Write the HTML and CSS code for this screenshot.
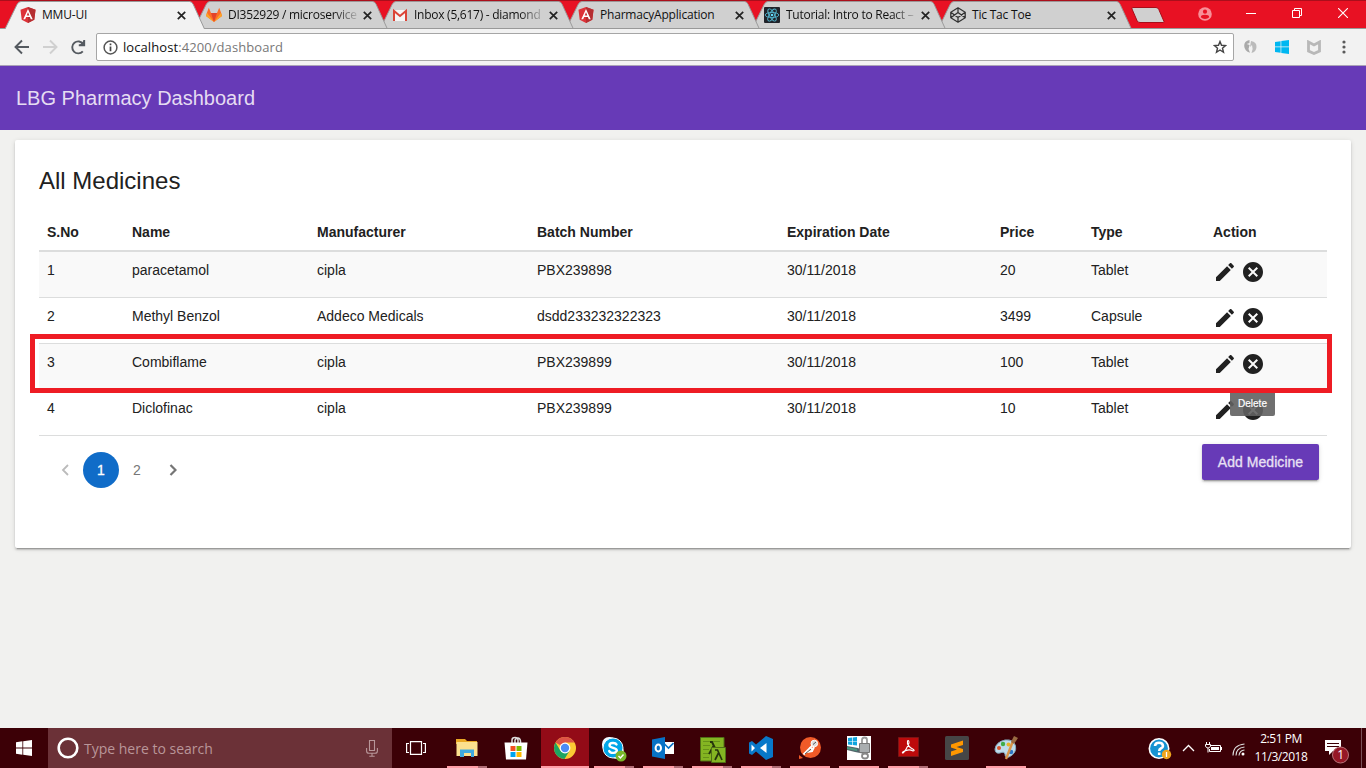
FILE: index.html
```html
<!DOCTYPE html>
<html lang="en">
<head>
<meta charset="utf-8">
<title>MMU-UI</title>
<link rel="stylesheet" href="styles.css">
</head>
<body>
<svg class="defs" width="0" height="0">
  <symbol id="tab" viewBox="0 0 200 28"><path class="tab-fill" d="M0 28 12 3.5Q13.5.500 16 .500H184.500Q187 .500 188.300 3.500L199.500 28"/></symbol>
  <symbol id="close" viewBox="0 0 9 9"><path d="M.8.800 8.200 8.200M8.200.800.800 8.200" stroke="currentColor" stroke-width="1.700"/></symbol>
  <symbol id="angular" viewBox="0 0 16 17"><path fill="#dd3238" d="M8 0 16 2.800 14.700 13.500 8 17 1.300 13.500 0 2.800z"/><path fill="#b52e31" d="M8 0 16 2.800 14.700 13.500 8 17z"/><path fill="#fff" fill-rule="evenodd" d="M8 2 3 13H5L6 10.500H10L11 13H13zM8 5.600 9.400 9H6.600z"/></symbol>
  <symbol id="edit" viewBox="0 0 24 24"><path fill="currentColor" d="M3 17.250V21h3.750L17.810 9.940l-3.750-3.750L3 17.250zM20.710 7.040c.39-.39.39-1.020 0-1.410l-2.340-2.340c-.39-.39-1.020-.39-1.410 0l-1.830 1.830 3.750 3.750 1.830-1.830z"/></symbol>
  <symbol id="cancel" viewBox="0 0 24 24"><path fill="currentColor" d="M12 2C6.470 2 2 6.470 2 12s4.470 10 10 10 10-4.470 10-10S17.530 2 12 2zm5 13.590L15.590 17 12 13.410 8.410 17 7 15.590 10.590 12 7 8.410 8.410 7 12 10.590 15.590 7 17 8.410 13.410 12 17 15.590z"/></symbol>
  <symbol id="windows" viewBox="0 0 16 16"><path fill="currentColor" d="M0 2.200 6.400 1.300V7.500H0zM7.200 1.200 16 0V7.500H7.200zM0 8.400H6.400V14.700L0 13.800zM7.200 8.400H16V16L7.200 14.800z"/></symbol>
</svg>

<header class="browser">
  <div class="tabs">
    <div class="tab active"><svg class="shape"><use href="#tab"/></svg><svg class="fav"><use href="#angular"/></svg><span class="tab-title">MMU-UI</span><svg class="close"><use href="#close"/></svg></div>
    <div class="tab"><svg class="shape"><use href="#tab"/></svg><svg class="fav" viewBox="0 0 16 16"><path fill="#fc6d26" d="M8 15 0 9 1 5.500 2.800.800 5 6H11L13.200.800 15 5.500 16 9z"/><path fill="#e24329" d="M8 15 5 6H11z"/><path fill="#fca326" d="M8 15 0 9 1 5.800zM8 15 16 9 15 5.800z"/></svg><span class="tab-title fade">DI352929 / microservice</span><svg class="close"><use href="#close"/></svg></div>
    <div class="tab"><svg class="shape"><use href="#tab"/></svg><svg class="fav" viewBox="0 0 16 16"><path fill="#f5f5f5" d="M1 3H15V14H1z"/><path fill="none" stroke="#db4437" stroke-width="2" d="M2 14V4L8 9 14 4V14"/></svg><span class="tab-title fade">Inbox (5,617) - diamond</span><svg class="close"><use href="#close"/></svg></div>
    <div class="tab"><svg class="shape"><use href="#tab"/></svg><svg class="fav"><use href="#angular"/></svg><span class="tab-title">PharmacyApplication</span><svg class="close"><use href="#close"/></svg></div>
    <div class="tab"><svg class="shape"><use href="#tab"/></svg><svg class="fav" viewBox="0 0 16 16"><rect width="16" height="16" rx="1" fill="#20232a"/><g fill="none" stroke="#53b5cf" stroke-width=".9"><ellipse cx="8" cy="8" rx="6.800" ry="2.600"/><ellipse cx="8" cy="8" rx="6.800" ry="2.600" transform="rotate(60 8 8)"/><ellipse cx="8" cy="8" rx="6.800" ry="2.600" transform="rotate(120 8 8)"/></g><circle cx="8" cy="8" r="1.300" fill="#61dafb"/></svg><span class="tab-title fade">Tutorial: Intro to React –</span><svg class="close"><use href="#close"/></svg></div>
    <div class="tab"><svg class="shape"><use href="#tab"/></svg><svg class="fav" viewBox="0 0 16 16"><path fill="none" stroke="#333" stroke-width="1.300" stroke-linejoin="round" d="M8 .800 15.200 5.200V10.800L8 15.200.800 10.800V5.200zM8 .800V5.400M8 15.200V10.600M.800 5.200 8 10.600 15.200 5.200M.800 10.800 8 5.400 15.200 10.800"/></svg><span class="tab-title">Tic Tac Toe</span><svg class="close"><use href="#close"/></svg></div>
    <svg class="new-tab" viewBox="0 0 34 17"><path fill="#d0d0d0" stroke="#a80d19" d="M1.500.500H25Q27 .500 27.800 2.500L33 14.500Q33 15.500 32 15.500H9Q7 15.500 6.200 14L1 2Q.700.500 1.500.500z"/></svg>
    <div class="controls">
      <svg width="14" height="14" viewBox="0 0 14 14"><circle cx="7" cy="7" r="6.800" fill="#f88f98"/><circle cx="7" cy="4.700" r="2.100" fill="#e81123"/><path fill="#e81123" d="M2.800 10.200Q3 7.800 7 7.800T11.200 10.200Q9.500 12 7 12T2.800 10.200z"/></svg>
      <svg width="10" height="10" viewBox="0 0 10 10"><path stroke="#fff" d="M0 5.500H10"/></svg>
      <svg width="10" height="10" viewBox="0 0 10 10"><path fill="none" stroke="#fff" d="M.500 2.500H7.500V9.500H.500zM2.500 2.500V.500H9.500V7.500H7.500"/></svg>
      <svg width="10" height="10" viewBox="0 0 10 10"><path stroke="#fff" stroke-width="1.100" d="M0 0 10 10M10 0 0 10"/></svg>
    </div>
  </div>
  <div class="toolbar">
    <svg class="nav-icon" viewBox="0 0 16 16"><path d="M15 8H2M8 1.500 1.500 8 8 14.500"/></svg>
    <svg class="nav-icon disabled" viewBox="0 0 16 16"><path d="M1 8H14M8 1.500 14.500 8 8 14.500"/></svg>
    <svg class="nav-icon" viewBox="0 0 16 16"><path d="M12.800 12.300A6 6 0 1 1 13.200 5M14.200 1V6.200H8.800"/><path class="solid" d="M14.500 1V6.700H8.800z"/></svg>
    <div class="omnibox">
      <svg width="15" height="15" viewBox="0 0 15 15"><circle cx="7.500" cy="7.500" r="6.400" fill="none" stroke="#555" stroke-width="1.500"/><path stroke="#444" stroke-width="1.700" d="M7.500 6.500V11.200M7.500 3.500V5.200"/></svg>
      <span class="url"><b>localhost</b>:4200/dashboard</span>
      <svg class="star" width="14" height="14" viewBox="0 0 14 14"><path fill="none" stroke="#444" stroke-width="1.400" d="M7 1.500 8.500 5.300 12.600 5.600 9.500 8.200 10.500 12.300 7 10 3.500 12.300 4.500 8.200 1.400 5.600 5.500 5.300z"/></svg>
    </div>
    <div class="extensions">
      <svg width="13" height="14" viewBox="0 0 13 14"><path fill="#a9a9a9" d="M5.500 0Q0 1 .200 6 .500 11 6 12.800L4.500 9 5.600 5 2.700 4 5.500 3z"/><path fill="#bbb" d="M7 1Q12.800 2 12.500 7T7.500 13Q9.500 9 8 5L6 7z"/></svg>
      <svg class="blue" width="14" height="14"><use href="#windows"/></svg>
      <svg class="shield" width="14" height="15" viewBox="0 0 14 15"><path fill="none" stroke="#b8b8b8" stroke-width="2.800" d="M1.500 2V11L7 13.500 12.500 11V2L7 5z"/></svg>
      <svg class="menu" width="4" height="14" viewBox="0 0 4 14"><g fill="#5a5a5a"><circle cx="2" cy="2" r="1.600"/><circle cx="2" cy="7" r="1.600"/><circle cx="2" cy="12" r="1.600"/></g></svg>
    </div>
  </div>
</header>

<main class="page">
  <div class="app-bar">LBG Pharmacy Dashboard</div>
  <section class="card">
    <h1>All Medicines</h1>
    <table class="medicines">
      <colgroup><col class="c-no"><col class="c-name"><col class="c-maker"><col class="c-batch"><col class="c-date"><col class="c-price"><col class="c-type"><col></colgroup>
      <thead><tr><th>S.No</th><th>Name</th><th>Manufacturer</th><th>Batch Number</th><th>Expiration Date</th><th>Price</th><th>Type</th><th>Action</th></tr></thead>
      <tbody>
        <tr><td>1</td><td>paracetamol</td><td>cipla</td><td>PBX239898</td><td>30/11/2018</td><td>20</td><td>Tablet</td><td><div class="actions"><svg><use href="#edit"/></svg><svg><use href="#cancel"/></svg></div></td></tr>
        <tr><td>2</td><td>Methyl Benzol</td><td>Addeco Medicals</td><td>dsdd233232322323</td><td>30/11/2018</td><td>3499</td><td>Capsule</td><td><div class="actions"><svg><use href="#edit"/></svg><svg><use href="#cancel"/></svg></div></td></tr>
        <tr><td>3</td><td>Combiflame</td><td>cipla</td><td>PBX239899</td><td>30/11/2018</td><td>100</td><td>Tablet</td><td><div class="actions"><svg><use href="#edit"/></svg><svg><use href="#cancel"/></svg></div></td></tr>
        <tr><td>4</td><td>Diclofinac</td><td>cipla</td><td>PBX239899</td><td>30/11/2018</td><td>10</td><td>Tablet</td><td><div class="actions"><svg><use href="#edit"/></svg><svg><use href="#cancel"/></svg></div></td></tr>
      </tbody>
    </table>
    <div class="table-footer">
      <nav class="pager">
        <svg class="prev" viewBox="0 0 8 12"><path d="M7 1 2 6 7 11"/></svg>
        <span class="current">1</span><span>2</span>
        <svg viewBox="0 0 8 12"><path d="M1.500 1 6.500 6 1.500 11"/></svg>
      </nav>
      <button class="add">Add Medicine</button>
    </div>
  </section>
  <div class="tooltip">Delete</div>
  <div class="marker"></div>
</main>

<footer class="taskbar">
  <div class="start"><svg width="16" height="16"><use href="#windows"/></svg></div>
  <div class="search">
    <svg width="22" height="22" viewBox="0 0 22 22"><circle cx="11" cy="11" r="9.300" fill="none" stroke="#fff" stroke-width="2.600"/></svg>
    <span>Type here to search</span>
    <svg class="mic" width="12" height="17" viewBox="0 0 12 17"><path fill="none" stroke="#b89699" stroke-width="1.100" d="M3.500.500H8.500V10.500H3.500zM.600 8V11Q.600 13.300 3 13.300H9Q11.400 13.300 11.400 11V8M6 13.300V16.300M3.300 16.300H8.700"/></svg>
  </div>
  <div class="start"><svg width="20" height="14" viewBox="0 0 20 14"><path fill="none" stroke="#fff" stroke-width="1.200" d="M4.500.600H15.500V13.400H4.500zM3 2.500H.600V11.500H3M17 2.500H19.400V11.500H17"/></svg></div>
  <div class="apps">
    <div class="app open multi"><svg width="22" height="20" viewBox="0 0 22 20"><path fill="#e9a825" d="M0 1H9L11 3H21V6H0z"/><path fill="#fbe08f" d="M.500 4H21.500V18H.500z"/><path fill="#3fa9e0" d="M4 19V11.500H18V19H15V15H8V19z"/></svg></div>
    <div class="app"><svg width="24" height="24" viewBox="0 0 24 24"><path fill="none" stroke="#ddd" stroke-width="1.500" d="M8 7V4Q8 1.500 11 1.500T14 4V7M11 7V4Q12 2 14 2T16.500 5V7"/><path fill="#fff" d="M.500 6.500H23.500L22 23.500H2z"/><path fill="#f25022" d="M6.500 10H11.500V15H6.500z"/><path fill="#7fba00" d="M12.500 10H17.500V15H12.500z"/><path fill="#00a4ef" d="M6.500 16H11.500V21H6.500z"/><path fill="#ffb900" d="M12.500 16H17.500V21H12.500z"/></svg></div>
    <div class="app open focused"><svg width="22" height="22" viewBox="0 0 22 22"><circle cx="11" cy="11" r="11" fill="#fcc934"/><path fill="#de5246" d="M11 11 1.500 5.500A11 11 0 0 1 20.500 5.500H11z"/><path fill="#1da462" d="M1.500 5.500A11 11 0 0 0 10.500 22L15.700 13.500 6.300 13.500z"/><circle cx="11" cy="11" r="5.400" fill="#fff"/><circle cx="11" cy="11" r="4.200" fill="#4c8bf5"/></svg></div>
    <div class="app open multi"><svg class="skype" width="26" height="26" viewBox="0 0 26 26"><rect x="0" y="0" width="15" height="15" rx="7" fill="#f2faff"/><rect x="8" y="8" width="14" height="14" rx="7" fill="#f2faff"/><circle cx="11" cy="11" r="10" fill="#00a5e8" stroke="#f2faff"/><path fill="none" stroke="#fff" stroke-width="2.400" stroke-linecap="round" d="M14.500 7.500C13.500 5.300 7.500 5.300 7.500 8.300S14.800 10.500 14.800 13.500 8.500 16.700 7.200 14"/><circle cx="19" cy="19" r="5.500" fill="#78b629"/><path fill="none" stroke="#fff" stroke-width="1.400" d="M16.500 19 18.400 21 21.500 17.500"/></svg></div>
    <div class="app open multi"><svg width="22" height="22" viewBox="0 0 22 22"><path fill="#fff" d="M11 5H22V17H11z"/><path fill="none" stroke="#0872c6" stroke-width="1.600" d="M12 6.500 16.500 11 21.500 6"/><path fill="#0872c6" d="M0 2.500 13 0V22L0 19.500z"/><ellipse cx="6.300" cy="11" rx="2.700" ry="3.500" fill="none" stroke="#fff" stroke-width="2"/></svg></div>
    <div class="app open multi"><svg class="low" width="26" height="26" viewBox="0 0 26 26"><path fill="#84b522" stroke="#506f16" d="M.500.500H24V24H.500z"/><path stroke="#679119" d="M3 4.500H20M3 8.500H10M3 12.500H9M3 16.500H9M3 20.500H9"/><path fill="none" stroke="#26350d" stroke-width="1.900" d="M10 5H12L17 15M13.500 9 9 17"/><path fill="#84b522" stroke="#506f16" d="M11.500 10.500H25.500V25.500H11.500z"/><path fill="none" stroke="#26350d" stroke-width="1.700" d="M15 13H17.500L22 23M18.500 16 15 23"/></svg></div>
    <div class="app open multi"><svg width="24" height="24" viewBox="0 0 24 24"><path fill="#0878c9" d="M17 0 24 3V21L17 24 7 15.500 3 19 0 17.500V6.500L3 5 7 8.500z"/><path fill="#fff" d="M17.500 7V17L11 12zM2.500 8.500V15.500L6 12z"/></svg></div>
    <div class="app open"><svg width="22" height="22" viewBox="0 0 22 22"><circle cx="11.500" cy="10.500" r="10.500" fill="#f05a28"/><path fill="#f05a28" d="M0 22V18L4 21z"/><circle cx="15.300" cy="6.500" r="3.300" fill="#ddd" stroke="#fff"/><path fill="none" stroke="#fff" stroke-width="2" d="M13 9 4.500 17.500M8 15 13 14 15 10M10 11 13 12"/><path stroke="#555" d="M14 7.500 17 5M6 17 12 12"/></svg></div>
    <div class="app open"><svg width="24" height="24" viewBox="0 0 24 24"><path fill="#fff" d="M0 0H24V24H0z"/><path fill="#10a6df" d="M1 2 5 1.500V5H1zM5.700 1.400 10 1V5H5.700zM1 5.600H5V9L1 8.500zM5.700 5.600H10V9.600L5.700 9z"/><path fill="#53656b" d="M0 10 11 12 18 16V18L8 16 0 14z"/><path fill="#4b9a81" d="M0 11 10 13V15L0 13z"/><path fill="none" stroke="#999" stroke-width="1.800" d="M15 8V4Q15 1.500 17.500 1.500T20 4V8"/><path fill="#a9adaf" stroke="#777" d="M12.500 7.500H22.500V16.500H12.500z"/><ellipse cx="18" cy="20" rx="3" ry="2.500" fill="none" stroke="#888" stroke-width="1.800"/></svg></div>
    <div class="app open multi"><svg class="high" width="21" height="20" viewBox="0 0 21 20"><path fill="#bd0a0b" stroke="#7b1415" d="M.500.500H20.500V19.500H.500z"/><path fill="none" stroke="#fff" stroke-width="1.100" d="M9.500 4Q8.500 9 15.500 12.500 17 14 15 14 11 11.500 5.500 14.500 3.500 16 5 16 8 13.500 11 6 11 2.500 9.500 4z"/></svg></div>
    <div class="app"><svg width="24" height="24" viewBox="0 0 24 24"><rect width="24" height="24" rx="1.500" fill="#464646"/><path fill="#ff9800" d="M6 8.500 18 4.500V9L11.500 11 18 13V16L6 20V15.500L12 13.500 6 11.500z"/></svg></div>
    <div class="app open"><svg width="24" height="24" viewBox="0 0 24 24"><path fill="#bfdceb" stroke="#84aabd" d="M11 4Q20 3 21.500 10T15 21Q11 22 11 18 10 15 6 17 1 18 1 13 2 6 11 4z"/><circle cx="9" cy="8" r="2.200" fill="#40ad48"/><circle cx="14.500" cy="8.500" r="2" fill="#e8b329"/><circle cx="5" cy="12" r="2" fill="#d9542b"/><circle cx="17" cy="16" r="2.300" fill="#2d75c4"/><path stroke="#d9954a" stroke-width="2.400" d="M12 23 19 5"/><path fill="#9a6b42" d="M17 6 20 0 24 2 20 8z"/></svg></div>
  </div>
  <div class="tray">
    <svg class="help" width="24" height="22" viewBox="0 0 24 22"><circle cx="11" cy="10.500" r="9.700" fill="#1593d2" stroke="#fff" stroke-width="1.600"/><path fill="none" stroke="#fff" stroke-width="2.600" d="M7 8Q7.300 4.700 11 4.700T15 8Q15 9.500 12.800 10.500 11.200 11.300 11.200 13M11.200 14.500V17"/><circle cx="18.500" cy="16.500" r="4.700" fill="#efa51d"/><path stroke="#fff" stroke-width="1.300" d="M18.500 14V19"/></svg>
    <svg class="chevron" width="13" height="8" viewBox="0 0 13 8"><path fill="none" stroke="#fff" stroke-width="1.300" d="M1 7 6.500 1.500 12 7"/></svg>
    <svg class="battery" width="17" height="12" viewBox="0 0 17 12"><path fill="none" stroke="#fff" d="M5 3.500H15.500V9.500H4.500V7M1.500 0V2.500M4.500 0V2.500M.500 2.500H5.500V4Q5 6 3 6T.500 4zM3 6V10.500"/><path fill="#fff" d="M6 5H14V8H6zM16 5H17V8H16z"/></svg>
    <svg class="wifi" width="13" height="13" viewBox="0 0 13 13"><g fill="none" stroke="#ddd" stroke-width="1.100"><path d="M1 12.500Q1 2 12.500 1"/><path d="M4 12.500Q4 5 12.500 4"/><path d="M7 12.500Q7.500 7.500 12.500 7"/></g><circle cx="11" cy="11" r="1.500" fill="#fff"/></svg>
    <div class="clock"><span>2:51 PM</span><span>11/3/2018</span></div>
    <svg class="notice" width="26" height="26" viewBox="0 0 26 26"><path fill="#fff" d="M1 2H17V13H9L5 17V13H1z"/><path stroke="#3c0006" d="M3 5.500H15M3 8.500H15"/><circle cx="16.500" cy="17" r="8" fill="#961826" stroke="#b9747b"/></svg>
    <span class="badge">1</span>
    <i class="desktop-edge"></i>
  </div>
</footer>
</body>
</html>
```
FILE: styles.css
```css
* { box-sizing: border-box; }
body { margin: 0; width: 1366px; height: 768px; overflow: hidden; display: flex; flex-direction: column; font-family: "Liberation Sans", Arial, sans-serif; color: #212121; background: #f1f1ef; }
svg { display: block; flex: none; }
.defs { position: absolute; }

.browser { height: 66px; flex: none; font-family: "Open Sans", "Noto Sans", sans-serif; }
.tabs { height: 29px; display: flex; background: #e81123; border-top: 1px solid #ab0e1b; border-bottom: 1px solid #999; padding-left: 5px; }
.tab { position: relative; width: 186px; height: 28px; flex: none; display: flex; align-items: center; padding: 0 9px 0 15px; color: #111; z-index: 1; }
.tab:nth-child(1) { z-index: 7; }
.tab:nth-child(2) { z-index: 6; }
.tab:nth-child(3) { z-index: 5; }
.tab:nth-child(4) { z-index: 4; }
.tab:nth-child(5) { z-index: 3; }
.tab:nth-child(6) { z-index: 2; }
.shape { position: absolute; left: 0; top: 0; width: 200px; height: 27px; z-index: -1; fill: #d0d0d0; stroke: #999; }
.active .shape { fill: #f2f2f2; height: 28px; }
.fav { width: 16px; height: 16px; }
.tab-title { flex: none; width: 129px; margin-left: 6px; white-space: nowrap; font-size: 12px; letter-spacing: -.2px; line-height: 20px; }
.fade { letter-spacing: -.26px; -webkit-mask-image: linear-gradient(90deg, #000 82%, rgba(0,0,0,.15)); mask-image: linear-gradient(90deg, #000 82%, rgba(0,0,0,.15)); }
.close { width: 9px; height: 9px; margin-left: 6px; margin-top: 1px; color: #222; }
.new-tab { width: 34px; height: 17px; margin: 6px 0 0 10px; }
.controls { flex: 1; display: grid; grid-template-columns: repeat(4, 46px); justify-content: end; justify-items: center; padding-top: 7px; align-items: start; height: 25px; }
.controls svg:first-child { margin-top: -1px; }
.toolbar { height: 37px; display: flex; align-items: center; background: #f2f2f2; border-bottom: 1px solid #aaa2b8; padding: 0 18px 0 14px; }
.nav-icon { width: 16px; height: 16px; margin-right: 12px; fill: none; stroke: #555a60; stroke-width: 1.900; }
.nav-icon.disabled { stroke: #d0d0d0; }
.nav-icon .solid { fill: #555a60; stroke: none; }
.omnibox { width: 1138px; height: 28px; margin-left: -2px; flex: none; display: flex; align-items: center; background: #fff; border: 1px solid #a6a6a6; border-radius: 2px; padding: 0 6px; }
.url { margin-left: 5px; color: #777; font-size: 13px; letter-spacing: .08px; white-space: nowrap; }
.url b { font-weight: 400; color: #111; }
.star { margin-left: auto; }
.extensions { flex: 1; display: flex; align-items: center; padding-left: 10px; }
.blue { color: #00b7f1; margin-left: 18px; }
.shield { margin-left: 18px; }
.menu { margin-left: 21px; }

.page { position: relative; flex: 1; }
.app-bar { height: 64px; padding: 0 16px; background: #673ab7; color: #e5dcf2; font-size: 20px; line-height: 64px; }
.card { margin: 10px 15px 0; height: 408px; padding: 24px; background: #fff; border-radius: 2px; box-shadow: 0 3px 1px -2px rgba(0,0,0,.2), 0 2px 2px 0 rgba(0,0,0,.14), 0 1px 5px 0 rgba(0,0,0,.12); }
h1 { margin: 0; height: 50px; font-size: 24px; font-weight: 400; line-height: 34px; }
.medicines { width: 1288px; table-layout: fixed; border-collapse: separate; border-spacing: 0; font-size: 14px; line-height: 20px; }
.c-no { width: 85px; } .c-name { width: 185px; } .c-maker { width: 220px; } .c-batch { width: 250px; } .c-date { width: 213px; } .c-price { width: 91px; } .c-type { width: 122px; }
.medicines th { height: 38px; padding: 0 8px; text-align: left; border-bottom: 2px solid #dcdddd; }
.medicines td { height: 46px; padding: 8px; vertical-align: top; border-bottom: 1px solid #dcdddd; }
.medicines tbody tr:nth-child(odd) { background: #f9f9f9; }
.actions { display: flex; gap: 4px; height: 24px; }
.actions svg { width: 24px; height: 24px; }
.table-footer { display: flex; justify-content: space-between; align-items: flex-start; padding: 8px 8px 0; }
.pager { display: grid; grid-template-columns: repeat(4, 36px); align-items: center; justify-items: center; height: 36px; margin: 8px 0 0; font-size: 14px; color: #777; }
.pager svg { width: 8px; height: 12px; fill: none; stroke: #757575; stroke-width: 2.200; }
.pager .prev { stroke: #bbb; stroke-width: 1.800; }
.current { width: 36px; height: 36px; border-radius: 50%; background: #106cc8; color: #fff; line-height: 36px; text-align: center; -webkit-text-stroke: .3px #fff; }
.add { width: 117px; height: 36px; border: 0; padding: 0; border-radius: 2px; background: #673ab7; color: #e8e0f4; font: 14px "Liberation Sans", Arial, sans-serif; letter-spacing: .05px; -webkit-text-stroke: .3px #e8e0f4; box-shadow: 0 3px 1px -2px rgba(0,0,0,.2), 0 2px 2px rgba(0,0,0,.14), 0 1px 5px rgba(0,0,0,.12); }
.tooltip { position: absolute; left: 1230px; top: 324px; width: 45px; height: 26px; border-radius: 2px; background: rgba(97,97,97,.9); color: #fff; font-size: 10px; line-height: 27px; text-align: center; -webkit-text-stroke: .2px #fff; }
.marker { position: absolute; left: 30px; top: 268px; width: 1302px; height: 59px; border: 5px solid #ee1c24; }

.taskbar { height: 40px; flex: none; display: flex; background: #3c0006; color: #fff; font-family: "Open Sans", "Noto Sans", sans-serif; }
.start { width: 48px; display: flex; align-items: center; justify-content: center; }
.search { width: 344px; display: flex; align-items: center; padding: 0 14px 0 9px; background: #6b3137; color: #b99699; font-size: 14px; }
.search span { margin-left: 5px; }
.mic { margin-left: auto; }
.apps { display: flex; gap: 1px; margin-left: 3px; }
.app { width: 48px; display: flex; align-items: center; justify-content: center; position: relative; }
.app.open::after { content: ""; position: absolute; left: 4px; bottom: 0; width: 40px; height: 2px; background: #ff9da6; }
.app.multi::after { background: linear-gradient(90deg, #ff9da6 31px, #b06c75 31px); }
.app.focused { background: #930b17; }
.app.focused::after { left: 0; width: 48px; }
.skype { margin: 3px 0 0 2px; }
.low { margin: 3px 0 0 2px; }
.high { margin-bottom: 2px; }
.tray { margin-left: auto; display: flex; align-items: center; position: relative; }
.help { margin-top: 2px; }
.chevron { margin-left: 10px; }
.battery { margin-left: 10px; }
.wifi { margin: 2px 0 0 10px; }
.clock { width: 66px; margin-left: 3px; display: flex; flex-direction: column; align-items: center; font-size: 12px; line-height: 18px; letter-spacing: -.45px; }
.notice { margin: 5px 11px 0 10px; }
.badge { position: absolute; right: 22px; top: 17px; font-size: 12px; line-height: 20px; }
.desktop-edge { width: 5px; height: 40px; border-left: 1px solid #795057; }
```
